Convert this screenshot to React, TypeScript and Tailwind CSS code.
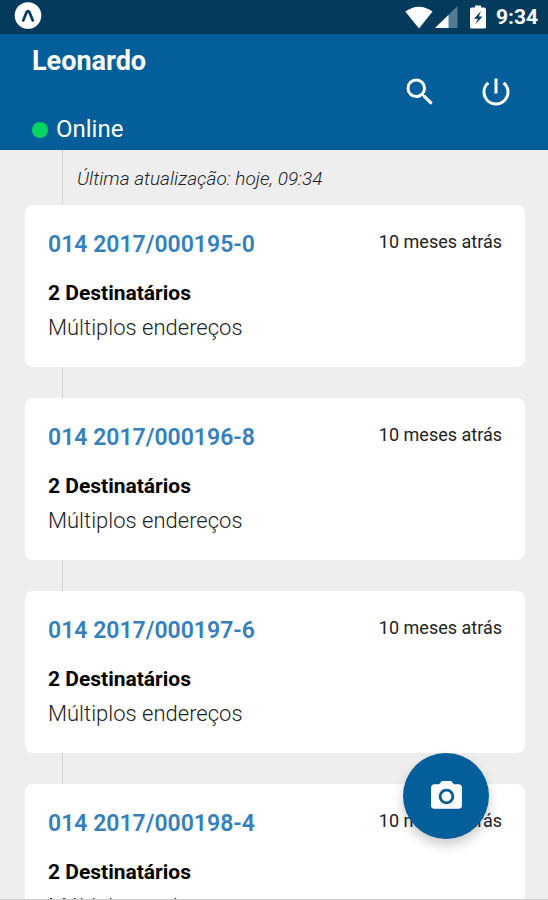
import React from "react";
import { MdCameraAlt, MdPowerSettingsNew, MdSearch } from "react-icons/md";

interface Process {
  id: string;
  date: string;
  recipients: string;
  address: string;
}

const processes: Process[] = [
  { id: "014 2017/000195-0", date: "10 meses atrás", recipients: "2 Destinatários", address: "Múltiplos endereços" },
  { id: "014 2017/000196-8", date: "10 meses atrás", recipients: "2 Destinatários", address: "Múltiplos endereços" },
  { id: "014 2017/000197-6", date: "10 meses atrás", recipients: "2 Destinatários", address: "Múltiplos endereços" },
  { id: "014 2017/000198-4", date: "10 meses atrás", recipients: "2 Destinatários", address: "Múltiplos endereços" },
];

const StatusBar = () => {
  return (
    <div className="flex h-[34px] shrink-0 items-center justify-between bg-[#043a5c] pr-[10px] pl-[14px] text-white">
      <svg viewBox="0 0 28 28" className="mb-1 size-7">
        <circle cx="14" cy="14.5" r="13.3" fill="white" />
        <path d="M8.8 20.5L12.6 11.2Q14 9 15.4 11.2L19.2 20.5" fill="none" stroke="#043a5c" strokeWidth="2.6" />
      </svg>
      <div className="flex items-center">
        {/* wifi */}
        <svg viewBox="0 0 28 23" className="h-[23px] w-7" fill="white">
          <path d="M0.3 5.6Q13.8 -4 27.6 5.6L14 22.5Z" />
        </svg>
        {/* signal */}
        <svg viewBox="0 0 23 22" className="ml-[2px] h-[22px] w-[23px]">
          <path d="M22.5 0V22H0Z" fill="#527b94" />
          <path d="M13.5 9V22H0Z" fill="white" />
        </svg>
        {/* battery */}
        <svg viewBox="0 0 16 24" className="ml-3 h-6 w-4">
          <path d="M5 0.5H11V2.5H14Q16 2.5 16 4.5V22Q16 23.5 14.5 23.5H1.5Q0 23.5 0 22V4.5Q0 2.5 2 2.5H5Z" fill="white" />
          <path d="M11 6L4 13.8H8L5.2 19.5L12.5 11.5H8.8Z" fill="#043a5c" />
        </svg>
        <span className="ml-[10px] text-[21px] leading-6 font-bold">9:34</span>
      </div>
    </div>
  );
};

const Header = () => {
  return (
    <header className="flex h-[116px] shrink-0 items-center justify-between bg-[#045e99] pr-[34px] pl-8 text-white">
      <div className="flex h-full flex-col justify-between pt-[11px] pb-[5px]">
        <h1 className="text-[27px] leading-8 font-bold">Leonardo</h1>
        <p className="flex items-center gap-2 text-[24px] leading-8">
          <span className="mt-[2px] size-4 rounded-full bg-[#00d563]" />
          Online
        </p>
      </div>
      <div className="flex gap-10">
        <button type="button" aria-label="Buscar">
          <MdSearch className="size-9" />
        </button>
        <button type="button" aria-label="Sair">
          <MdPowerSettingsNew className="size-9" />
        </button>
      </div>
    </header>
  );
};

const ProcessCard = ({ id, date, recipients, address }: Process) => {
  return (
    <article className="rounded-lg bg-white px-[23px] pt-6 pb-[23px]">
      <div className="flex items-start justify-between">
        <h2 className="text-[23px] leading-8 font-semibold text-[#3580bb]">
          {id}
        </h2>
        <span className="pt-px text-[18px] leading-6 text-[#222]">{date}</span>
      </div>
      <p className="mt-4 text-[21px] leading-8 font-bold text-black">
        {recipients}
      </p>
      <p className="mt-[3px] text-[22px] leading-8 font-light text-[#222]">
        {address}
      </p>
    </article>
  );
};

const App = () => {
  return (
    <div className="relative flex h-screen flex-col overflow-hidden border-b border-[#ccc] bg-[#eee] font-['Roboto',sans-serif]">
      <StatusBar />
      <Header />
      <main className="min-h-0 flex-1 overflow-y-auto [scrollbar-width:none]">
        <div className="relative pr-[23px] pb-8 pl-[25px]">
          {/* timeline */}
          <div className="absolute inset-y-0 left-[62px] w-px bg-[#d2d2d2]" />
          <div className="relative">
            <p className="pt-[17px] pb-[14px] pl-[52px] text-[19px] leading-6 font-light text-[#222] italic">
              Última atualização: hoje, 09:34
            </p>
            <div className="flex flex-col gap-[31px]">
              {processes.map((process) => (
                <ProcessCard key={process.id} {...process} />
              ))}
            </div>
          </div>
        </div>
      </main>
      <button
        type="button"
        aria-label="Câmera"
        className="absolute right-[59px] bottom-[60px] flex size-[86px] items-center justify-center rounded-full bg-[#045e99] text-white shadow-[0_6px_12px_rgba(0,0,0,0.2)]"
      >
        <MdCameraAlt className="size-[37px]" />
      </button>
    </div>
  );
};

export default App;
